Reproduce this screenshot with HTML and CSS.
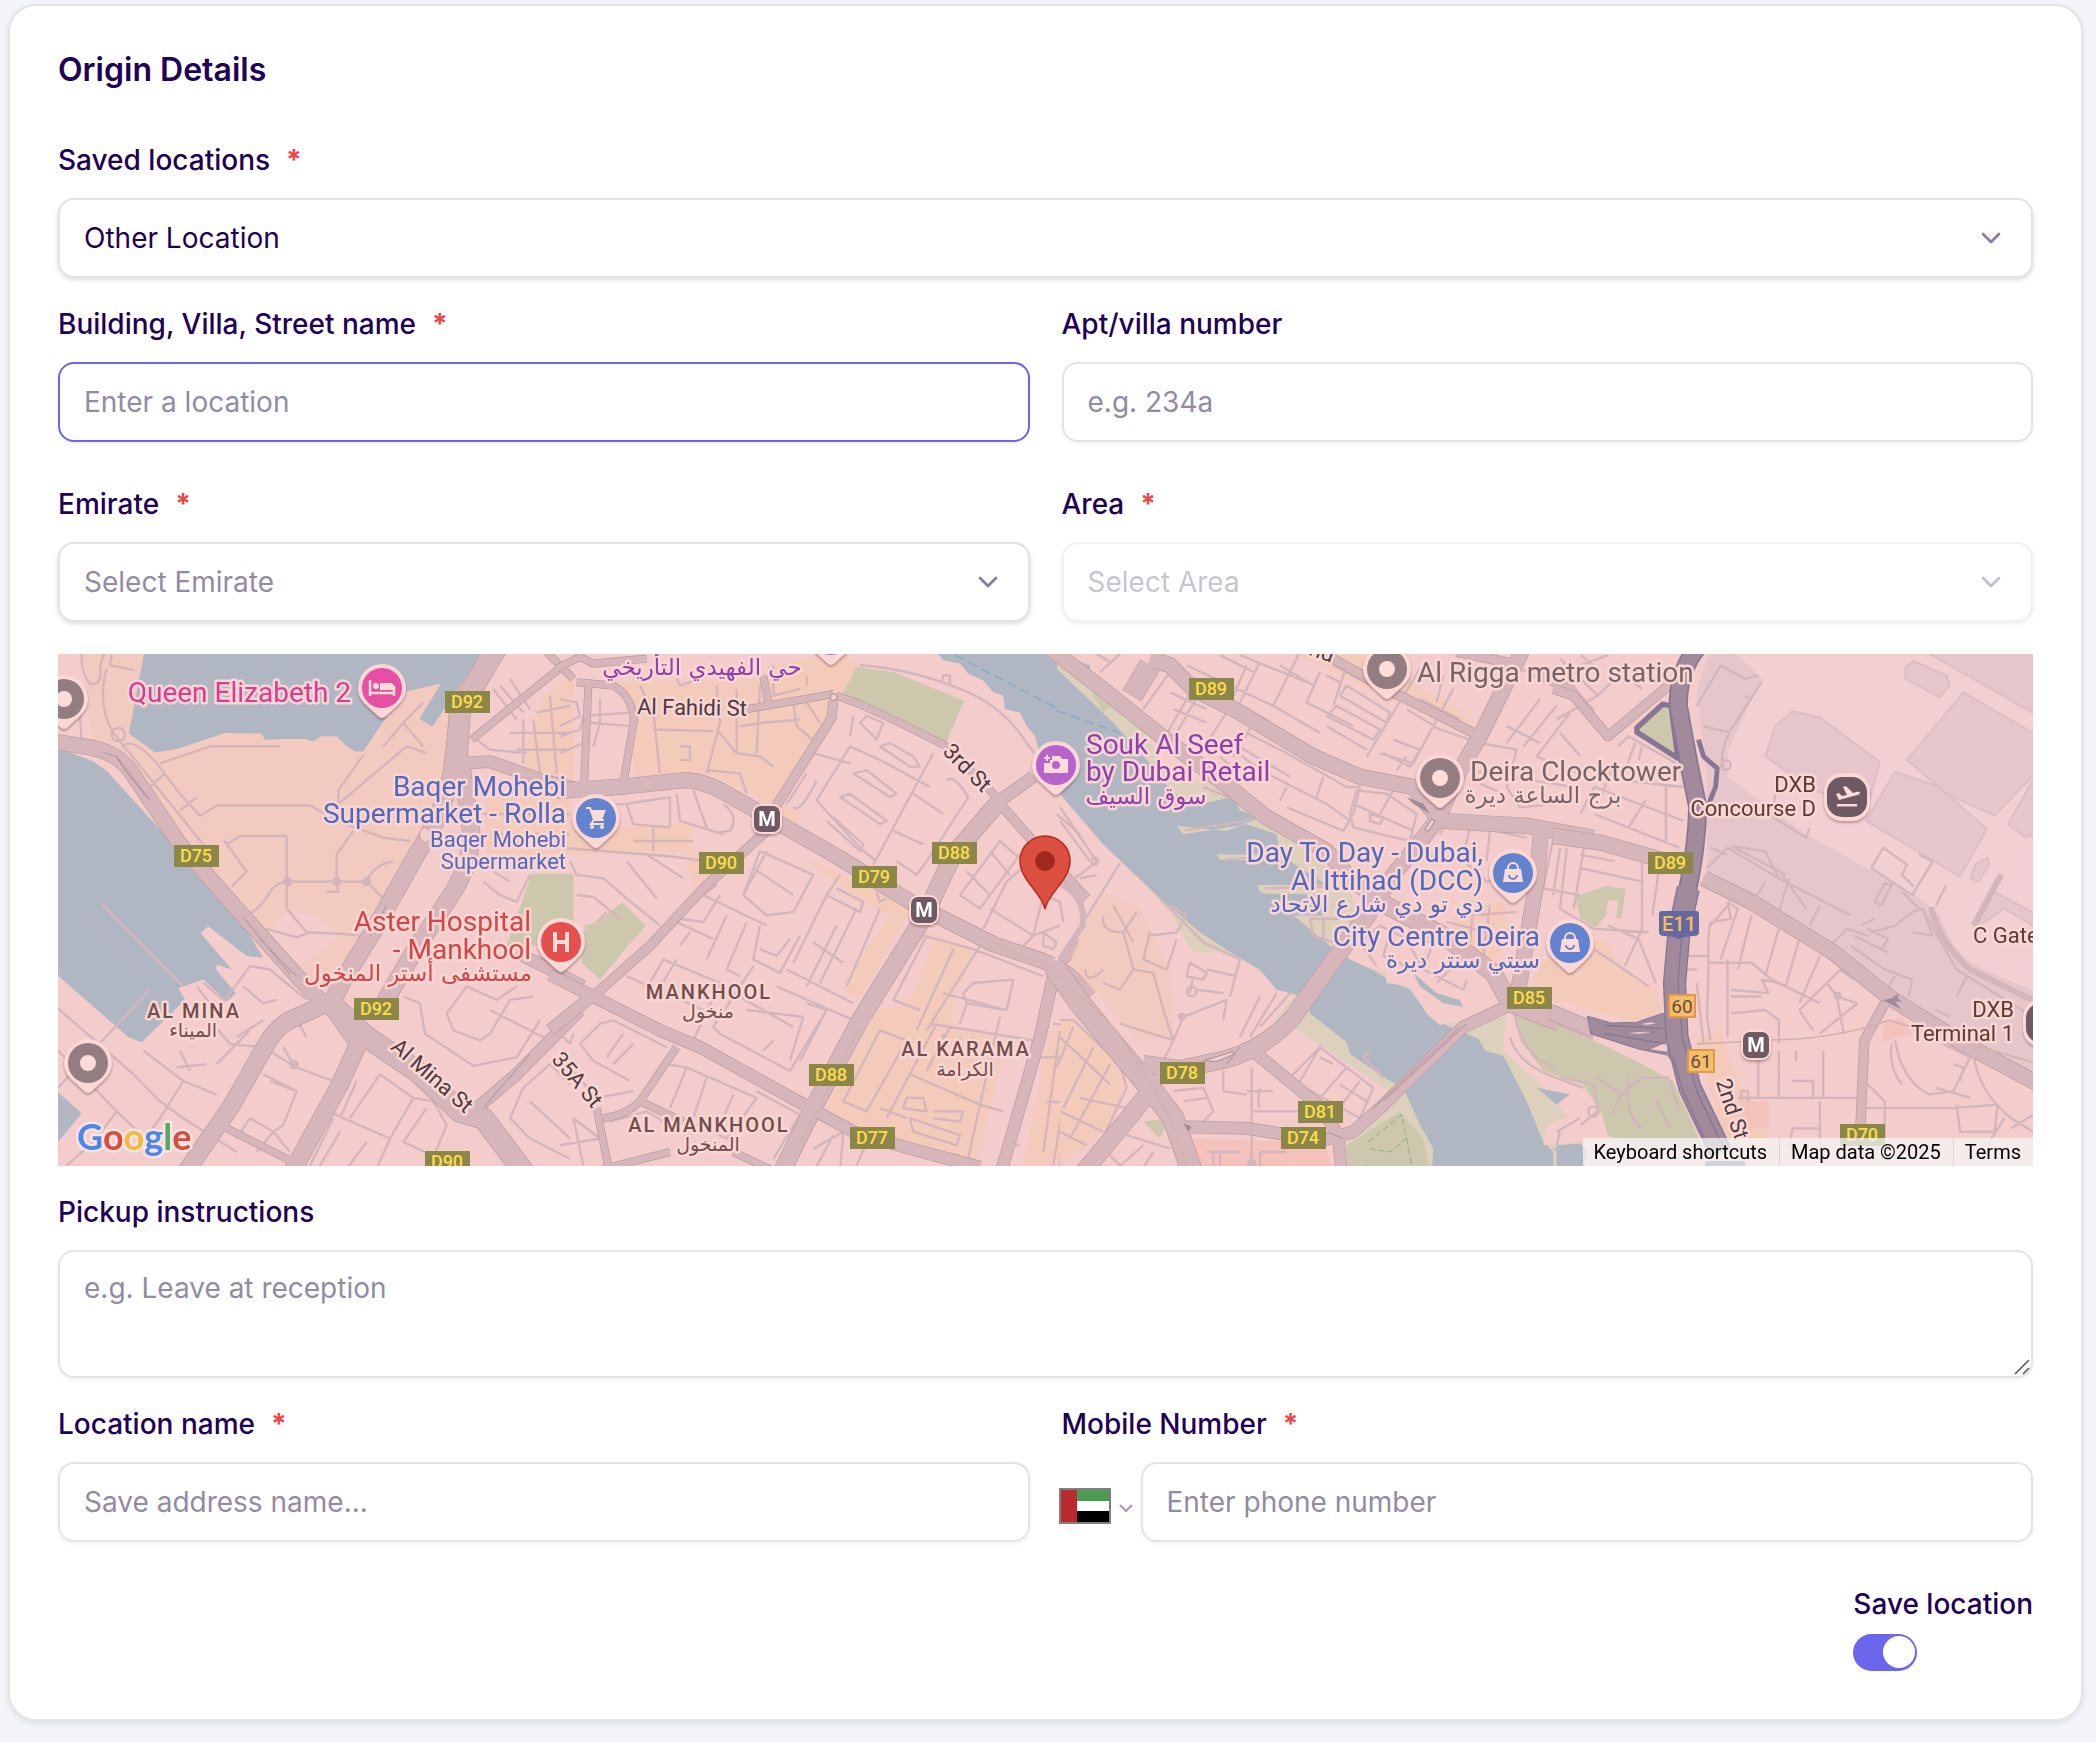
FILE: index.html
```html
<!DOCTYPE html>
<html lang="en">
<head>
<meta charset="utf-8">
<meta name="viewport" content="width=device-width, initial-scale=1">
<title>Origin Details</title>
<link rel="stylesheet" href="styles.css">
</head>
<body>
<svg class="sprite" aria-hidden="true">
  <symbol id="chevron" viewBox="0 0 24 24"><path d="m6 9 6 6 6-6" fill="none" stroke="currentColor" stroke-width="2" stroke-linecap="round" stroke-linejoin="round"/></symbol>
</svg>
<main class="card">
  <h1 class="card-title">Origin Details</h1>
  <form class="form">
    <div class="field">
      <label class="label" for="saved">Saved locations <span class="req">*</span></label>
      <div class="select raised">
        <select id="saved"><option>Other Location</option></select>
        <svg class="chev" aria-hidden="true"><use href="#chevron"/></svg>
      </div>
    </div>

    <div class="row">
      <div class="field">
        <label class="label" for="street">Building, Villa, Street name <span class="req">*</span></label>
        <input class="control active" id="street" type="text" placeholder="Enter a location">
      </div>
      <div class="field">
        <label class="label" for="apt">Apt/villa number</label>
        <input class="control" id="apt" type="text" placeholder="e.g. 234a">
      </div>
    </div>

    <div class="row spaced">
      <div class="field">
        <label class="label" for="emirate">Emirate <span class="req">*</span></label>
        <div class="select raised empty">
          <select id="emirate"><option>Select Emirate</option></select>
          <svg class="chev" aria-hidden="true"><use href="#chevron"/></svg>
        </div>
      </div>
      <div class="field">
        <label class="label" for="area">Area <span class="req">*</span></label>
        <div class="select raised empty disabled">
          <select id="area" disabled><option>Select Area</option></select>
          <svg class="chev" aria-hidden="true"><use href="#chevron"/></svg>
        </div>
      </div>
    </div>

    <section class="map" aria-label="Map">
      <svg class="map-canvas" viewBox="58 654 1975 512" preserveAspectRatio="xMidYMid slice">
        <defs>
          <path id="pin-shape" d="M-24 0a24 24 0 1 1 48 0c0 8-4 13-9 18L4 28q-4 4-8 0L-15 18c-5-5-9-10-9-18z"/>
          <g id="shop"><path d="M-8-4h16l2 13h-20z" fill="#fcdcd9"/><path d="M-5-3v-2a5 5 0 0 1 10 0v2" fill="none" stroke="#fcdcd9" stroke-width="2"/><path d="M-4 2a4 4 0 0 0 8 0" fill="none" stroke="#6483cf" stroke-width="2"/></g>
          <g id="metro"><rect x="-15" y="-15" width="30" height="30" rx="9" fill="#fbd8d5"/><rect x="-13" y="-13" width="26" height="26" rx="7" fill="#6f5962"/><text class="metro-m" y="7">M</text></g>
          <g id="plane"><rect x="-23" y="-24" width="46" height="48" rx="18" fill="#fbd8d5"/><rect x="-20" y="-20" width="40" height="40" rx="15" fill="#6f5962"/><path d="M-10 7H10v2.500H-10zM-11-3l3-1 3 3 5-1-4-8 3-1 7 7 5-1.500q2 0 2 1.500l-1 1.500L-8 3z" fill="#fcdcd9"/></g>

          <g id="roads-a">
            <path class="w44" d="M10 285L130 305Q200 320 240 370L390 590 560 780 760 1000 820 1060"/>
            <path class="w52" d="M830 1060L720 1110Q680 1130 650 1180L540 1370 400 1570M1360 -10L1230 180 1205 380Q1180 500 1100 620L980 830 880 990 840 1070M1230 330L1265 560Q1260 650 1210 730L1090 910 990 1080M840 1060L925 1180 870 1300 720 1570"/>
            <path class="w64" d="M830 1050L950 1160 1100 1260 1230 1380 1300 1400 1430 1570M1350 -10L1230 190 1215 400"/>
            <path class="w36" d="M1270 1380L1400 1270 1590 1080M1400 910L1600 1010M1230 350L1320 345 1480 400 1600 430"/>
            <path class="w22" d="M1265 280L1540 60M1490 20L1570 100M510 1420L730 1530"/>
          </g>
          <g id="roads-b">
            <path class="w44" d="M-10 432L200 418 370 400Q430 400 500 440L830 625 1060 765 1300 885 1450 935Q1530 965 1590 1040"/>
            <path class="w52" d="M1320 460L1180 620 1095 800 900 1110 760 1370 660 1570"/>
            <path class="w36" d="M-30 975L110 1045 300 1140 420 1190 760 1375 880 1440 1050 1490 1260 1545M1420 390L1320 460M1480 980L1440 1160 1370 1400 1320 1570M100 1035L-30 1140"/>
            <path class="w28" d="M820 165L815 215 640 490M620 550L430 720 270 890 110 1030M1320 470L1400 560 1580 750M1580 870L1490 950"/>
            <path class="w22" d="M560 190L820 145M830 150L900 175 1040 240 1160 300 1310 450M350 1190L240 1350Q200 1390 130 1400M110 1370L150 1570M240 1350L370 1410M130 1550L330 1500M520 1500L650 1560M-10 70L60 35 100 55 260 40M50 110L160 120Q215 150 222 220L190 410M85 120L72 415M610 90L625 170"/>
          </g>
          <g id="roads-c">
            <path class="w64" d="M-20 950L60 1060 160 1180 270 1310 340 1400 400 1570M270 60L215 150"/>
            <path class="w52" d="M930 790L830 920 700 1100Q620 1190 500 1225L360 1255 250 1240M270 1320L180 1430 70 1560M960 760L1150 860 1300 970 1350 1060 1480 1110 1600 1160"/>
            <path class="w44" d="M-30 10L140 140 330 290 480 400 620 510 800 610 880 700 1000 780M270 40L330 60 400 130 540 200 760 330 900 390 1060 420 1140 520 1400 535 1600 570M1390 10L1260 270 1200 370 1130 520 1000 680 910 820M1445 530L1430 700 1370 1050"/>
            <path class="w36" d="M360 1425L560 1430 790 1465 880 1440 960 1370 1210 1130 1340 1070M590 1210L780 1365 835 1450 845 1570M250 1310L320 1270"/>
            <path class="w28" d="M780 20L1000 140 1240 260M1440 90L1530 130 1590 200M1190 20L1380 60"/>
          </g>
          <g id="roads-d">
            <path class="w44" d="M420 690L560 760 800 910 960 1040 1180 1180 1420 1310M-20 565L120 585 260 625 380 660M-30 1085L100 1140"/>
            <path class="w28" d="M950 1060L890 1170 878 1440M-20 130L40 150 140 270 330 110"/>
          </g>
        </defs>

        <rect x="58" y="654" width="1975" height="512" fill="#f3cccb"/>

        <!-- west: port and Al Mina -->
        <g transform="translate(50 645) scale(.3333 .338)">
          <path fill="#f3cabf" d="M90 20H1300L1140 560 980 800 880 980 860 1055 1000 1060 950 1060 700 940 740 850 640 860 560 760 380 580 200 320 130 290z"/>
          <path fill="#f3cccb" d="M710 790L790 795 870 860 740 960 640 870z"/>
          <path fill="#f4cabb" d="M1430 290L1480 150 1570 90V450L1430 400zM1310 450H1560V620H1310z"/>
          <path class="water" d="M283 20H1300L1145 245 1108 218 1172 115 1060 140 940 315 915 315 885 295 860 270 815 270 790 285 765 278 700 278 645 280 635 262 525 260 380 308 315 318 237 262zM20 303L130 345 170 372 380 600 540 765 640 925 590 920 475 832 452 852 545 960 500 945 498 960 558 1030 530 1055 460 990 385 1015 405 1050 275 1175 235 1160 20 975zM20 1320L95 1385 20 1475z"/>
          <path fill="#f3cabf" d="M1172 115L1060 140 940 315 1000 400 1150 330 1160 250 1108 218z"/>
          <path class="green" d="M1445 677H1570V890H1370z"/>
          <path class="minor" d="M152 763L400 1010M95 20Q90 80 120 115 160 120 150 60L165 20M185 30L180 60 255 75M170 70Q140 180 190 260L460 590M90 200L95 290M215 300Q250 270 320 350L390 440 450 505 500 475H780L860 520 1000 570 1080 580M330 350L480 300H690M390 490L440 450M300 420L345 380M940 325L865 430V470L1070 300 1130 320M1000 300L1060 230 1120 170M1060 230L1120 300M520 575L590 670 545 715M530 590L570 565H710V780L770 850 880 855 930 860M710 700H860L950 700 1010 760M860 700V620L910 550M600 795Q640 770 660 730 680 700 720 700M650 840L740 865 780 850M950 700Q970 650 1030 640M860 700L865 730H830M300 80M1330 130L1400 220M1350 120L1420 200M1380 100L1440 190M1280 280L1320 310 1430 320M1420 220V350M1450 220L1470 380M1500 150L1520 380M1380 260H1560M1400 310H1560M1460 200L1560 180M1300 700L1350 740 1400 760 1440 680M1330 670L1380 700M1300 500H1560M1350 560H1560M1060 1040L1110 1060 1125 1150 1270 1245 1400 1220 1470 1110M1250 1010L1190 1090 1210 1140 1290 1170 1320 1150 1380 1050 1450 1040M1250 1010L1340 1050 1400 1010M1320 1080L1420 1130 1500 1170M1380 1400L1420 1310 1500 1240 1560 1300M1380 1400L1440 1460 1560 1520M1440 1350L1560 1460M24 1075L250 1270 330 1350 400 1400 560 1500M24 1200L200 1380 330 1500M24 1310L110 1220 300 1020M280 1200L400 1290 500 1330M200 1380L130 1470 50 1540M400 1290L330 1400 250 1500M480 1110L600 950 660 960 770 1050M560 1160L640 1110M480 1110L540 1180 630 1190M500 1240L600 1140M640 1190L740 1250 850 1290M730 1240L700 1190M640 1270L740 1320 700 1420 670 1440 600 1400M740 1320L660 1290M600 1400L560 1460M670 1440L720 1500M670 1440L620 1500M990 1270L1090 1340 1020 1460 880 1400 820 1370M990 1270L900 1400M920 1290L870 1400M1090 1340L1150 1350 1190 1420 1140 1540M1130 1370L1060 1470 1190 1530M850 1400L780 1540M870 1440L810 1540M950 1470L890 1550M1020 1460L980 1550M390 1200L420 1260M380 1250L470 1240M440 1010L480 1060M460 1000L520 1050M580 1010L640 1060 680 1050M740 1110L770 1160"/>
          <circle class="minor" cx="205" cy="265" r="20"/>
          <circle class="dot" cx="713" cy="700" r="14"/><circle class="dot" cx="860" cy="700" r="14"/><circle class="dot" cx="950" cy="700" r="14"/><circle class="dot" cx="733" cy="1242" r="14"/>
          <use href="#roads-a" class="casing"/><use href="#roads-a" class="surface"/>
          <path d="M160 318L200 330 300 460M200 330Q215 365 300 460M580 805L720 975M630 870L740 980M1010 770L960 860M1300 1370L1440 1210" class="hair"/>
          <ellipse cx="1125" cy="562" rx="16" ry="22" fill="#f3cccb" stroke="#c5a1a8" stroke-width="3"/>
        </g>

        <!-- Mankhool and Al Karama -->
        <g transform="translate(560 645) scale(.3333 .338)">
          <path fill="#f4cabb" d="M180 110L600 100 640 60 850 20 900 60 820 190 640 470 440 380 230 400 200 200zM660 470L730 500 690 540zM30 540L400 530 390 590 460 690 400 710 370 610 30 620zM720 620L850 680 1060 770 900 1045Q850 1040 850 1000L990 800 880 740zM1090 840L1240 900 1170 1110 1340 1170 1250 1540 870 1425 800 1370 950 1080 1020 1070zM1470 1150L1560 1110V1440L1480 1540 1390 1540z"/>
          <path fill="#f3cccb" d="M1060 880L1120 870 1060 1040 1010 1060zM1180 1040L1230 960 1440 980 1340 1170 1180 1120z"/>
          <path class="green" d="M847 145L890 65 1000 80 1213 165 1155 295 1040 235 880 165zM187 762L258 830 200 895 120 990 65 940 75 830 110 820zM-5 685H40L35 800-5 812z"/>
          <path class="water" d="M1130 20L1150 45 1200 55 1225 85 1270 105 1300 140 1330 150 1335 190 1380 200 1400 240 1425 270 1435 310 1500 390 1590 510V60L1450 20z"/>
          <path d="M1185 30L1560 222" class="ferry"/>
          <path class="minor" d="M900 60Q1050 70 1200 130 1330 180 1400 290L1590 530M1145 110L1150 90 1170 90V115M0 160L50 170 60 210 0 240M0 270L60 250 70 210 210 200M0 320L70 290M90 230L210 240M100 300L120 230V160M240 120L280 200 300 380M280 250L460 255M350 100L360 120 450 90M470 120L480 230 440 380M530 130V320L600 330 640 360M540 240L610 230 720 220M600 120L590 320M360 300L390 300V340H360M530 320L470 250M440 370L540 380 560 440M640 60V150L720 130M740 90V120M700 170L710 240 770 290M740 170L780 230M200 470L220 530 330 540M200 470L330 450V540M350 440L360 520 490 560M220 580H400M280 540V610M490 470Q540 510 510 550L470 555M400 430L440 540M60 480L200 470M0 600L330 625 440 640M30 640L50 680 130 690 200 750 300 830M200 640L290 750M260 620L370 690M50 740L100 745 180 810M110 820L140 790M700 480Q720 500 770 400M720 370L760 320 870 350M680 470L740 380M870 300L770 460 900 600 950 640M870 300L960 340 1110 420M900 230L950 280 970 230 920 210zM880 210L870 270M960 300L1050 360 1080 360 1060 330 990 290zM880 380L990 450 1010 440 920 370zM840 450L960 530 980 520 870 440zM800 520L900 610 910 590 820 510M1120 320L1000 540 940 650M1160 400Q1180 380 1225 450L1100 640 1070 680 1010 640M1060 440L1150 500M1000 550L1090 590M1200 740L1320 580 1390 640M1200 740L1260 780 1380 620M1220 670L1290 740M1290 610L1350 680M1270 840L1340 700 1410 640M1290 780L1420 860 1500 830M1420 860L1450 740 1500 760 1510 820M1450 850L1490 880 1480 900 1450 890zM1390 890L1420 860M600 610L760 680 700 790 620 800 550 740zM580 660L700 740M620 610L550 740M840 680L800 740 700 940M800 740L900 790 910 760 830 720M760 880L850 940M830 830L740 1010M890 780L780 1000M960 780L860 1010M470 710L430 740M480 740L430 820 360 810M430 740L620 830M500 800L440 930M560 820L500 960M350 820L460 870M390 850L360 890M600 830L580 930 660 970 720 860M600 900L650 920 690 870M200 980L270 1010M270 1000L310 930 480 1000 400 1170M350 930L290 1030M200 980L430 1080M500 960L540 980M580 950L460 1130 480 1150 690 1260 800 1080 740 1060M520 1030L700 1130M650 1010L880 1110M610 1200L640 1170M800 1080L720 1230M560 1080L730 1100 690 1230M680 960L880 1060M950 730L960 760 980 750M60 1180L120 1120 160 1110 320 1190M60 1180L100 1230 210 1290M140 1220L190 1150M160 1240L220 1180M30 1250L110 1340 220 1320M0 1150L30 1180 40 1150M270 1300L320 1240 380 1250 590 1340 500 1460 320 1380M380 1250L330 1370M440 1280L400 1400M520 1330L480 1420M150 1410L260 1380 380 1450M590 1320L720 1390 640 1520M40 1400L120 1460 0 1480M40 1400L70 1540M760 1490L850 1440 840 1560M820 1450L760 1560M940 1430L880 1560M1090 860L1240 900M1100 860L1000 1050 1080 1080M1180 900L1070 1140M1240 900L1450 980M1260 890L1100 1140M1210 1030L1240 1000 1360 990 1340 1080 1220 1060zM1150 1030L1340 1080M1220 1060L1200 1120M1110 1120L1420 1170M960 1140L850 1350 920 1380 1040 1170zM1130 1120L980 1400M1170 1130L1100 1260M1050 1270L1260 1360M1260 1360L1220 1540M1150 1150L1140 1200M1200 1160V1200M1240 1160L1220 1220M1040 1340L1090 1340 1100 1380 1030 1370zM1120 1380L1210 1380 1200 1410 1120 1400M1050 1400L1200 1450 1190 1480 1060 1440zM960 1370L1040 1400M980 1480L1200 1510M1320 1100L1260 1360 1330 1380M1440 1220H1580M1480 1120L1560 1130M1500 1140L1450 1500M1540 1170L1480 1540M1460 1350L1570 1360M1520 1250L1500 1540M1380 1480L1340 1470M1490 500L1560 560"/>
          <use href="#roads-b" class="casing"/><use href="#roads-b" class="surface"/>
          <circle cx="821" cy="154" r="10" fill="#f3cccb" stroke="#a98f96" stroke-width="3"/>
          <path fill="#f3cccb" d="M1482 930L1492 920 1498 935zM1510 955L1520 945 1522 960zM1488 1005L1502 1002 1492 1015z"/>
          <path d="M1250 860L1580 1000M720 1480L900 1130" class="rail"/>
        </g>

        <!-- the creek and Deira -->
        <g transform="translate(1060 645) scale(.3333 .338)">
          <path fill="#f4cabb" d="M690 20H880L1200 190 1240 250 1060 190zM1200 780L1330 760 1350 880 1280 950 1150 880zM1440 940L1560 860V1060L1400 1050zM0 1100L40 1110 200 1270 160 1420 0 1540z"/>
          <path fill="#f3cabf" d="M70 840L130 730 240 780 330 960 340 1160 230 1170 180 1110 30 940z"/>
          <path fill="#f5c1bb" d="M390 1460L700 1470 800 1490 820 1560H400z"/>
          <path class="shore" d="M-10 20L180 150 340 400 520 400 700 580 850 700 940 850 850 940 1060 980 1160 1120 1340 1100 1330 1200 1440 1300 1560 1440V1570H1120L860 1570 860 1470 1000 1330 700 1130 600 1170 700 1040 520 910 400 910 330 790 0 430z"/>
          <path class="water" d="M-10 70L160 230 260 340 340 440 420 470 520 450 540 490 600 510 650 560 660 600 840 735 700 800 810 890 870 930 945 965 985 990 1050 1020 1110 1100 1170 1130 1255 1165 1275 1200 1330 1215 1400 1350 1450 1470 1480 1500V1570H1115L1120 1490 1080 1420 1030 1310 990 1290 870 1210 860 1175 750 1090 750 1060 740 1040 710 1035 650 1020 600 960 520 915 420 850 300 750 130 590-10 430z"/>
          <path fill="#ddd0bd" d="M350 535L500 550 600 510 720 620 860 720 850 860 600 730 590 710 800 710 690 640 480 635 470 620 660 620 650 560 560 530 370 560z"/>
          <path fill="#b0b7c3" d="M600 560L645 570 650 612 560 610zM660 660L720 690 690 705 610 700zM600 735L770 738 790 800 700 800z"/>
          <path fill="#f3cccb" d="M870 900L1020 840 1160 870 1300 1000 1250 1080 1140 1125 1100 1090 1050 1010 980 1000 975 970 870 930zM610 1200L720 1165 990 1320 880 1415 700 1300zM1330 1150L1380 1130 1450 1270 1570 1310V1470L1450 1480 1460 1420 1560 1380 1440 1290 1330 1200z"/>
          <path class="water" d="M1060 970L1130 1030 1200 1050 1210 1070 1150 1060 1080 1010zM1430 1310L1530 1330 1490 1360z"/>
          <path class="green" d="M1360 1070L1570 1160V1300L1450 1260 1380 1170zM860 1480L1020 1380 1090 1460 1110 1560H860zM90 130L180 160 130 200zM250 1410L330 1400 300 1460z"/>
          <path d="M-10 195L180 260" class="ferry"/>
          <path d="M925 1470L1025 1390 1040 1460 990 1500 930 1490M920 1540L1000 1560M1040 1460L1060 1560" class="trail"/>
          <path class="minor" d="M375 548L560 520 600 490 680 560M495 635L560 630M615 720L800 715M600 490L430 420M30 60L180 200M100 20L150 50M180 27L120 80M330 80L250 190M410 110L310 280M520 170L400 350M430 120L350 260M440 230L340 190M330 140L440 190M580 230L520 330M500 290L560 340 620 380 700 420 800 470 870 520M480 330L560 400M520 290L690 390M560 260L680 320 860 420 900 420 880 500 850 550 680 480M620 370L590 410M680 420L660 460M790 390L770 450M720 20L640 180 780 260M380 60L640 180M600 50L540 170M560 60L520 150M480 30L580 80M540 30L740 110M660 60L760 120M780 80L740 170 880 240M800 90L840 110M820 60L1010 160M860 120L990 200 980 230 840 150zM830 180L960 250 940 280 800 210zM800 240L920 310M1080 70L920 330M1180 130L1060 350 960 320M1040 190L1140 250 1230 280M1080 160L1200 220M1000 280L1080 310 1050 360 970 320M1150 90L1130 170M860 60L820 180M1010 370L1040 330M1260 290L1370 310 1340 420 1380 480 1490 470M1230 370L1540 420M1260 410L1330 440M1440 160L1340 290M1530 200L1430 330 1560 380M1380 70L1560 150M1340 240L1440 290M1490 180L1390 300M890 430L980 440 1070 500 1050 580 880 540 870 500zM930 500L970 510 960 530 930 520zM880 470L1060 550M1000 430L960 500M1480 570L1450 720 1560 740M1500 600L1480 740M1520 590H1580M1140 560L1160 520 1400 570M1230 540L1210 620M1290 550L1280 640M1100 620L1240 640M1170 600L1280 700 1400 680M1220 800L1370 790M1240 770L1230 880M1290 770L1270 920M1160 820L1370 870M750 810L860 810 920 850M750 810L760 860 820 880M790 810V870M960 830L1040 870 1090 960 1210 1020M960 830L900 880 950 950M990 850L970 920 1040 950M1040 870L1120 880 1090 960M1180 950L1130 1000M1210 1020L1220 990M180 645L70 820M160 770L220 880M130 800Q120 850 190 850L230 790M190 850L220 960 180 1020 130 1000M75 960Q80 1010 130 960M300 750L430 880 540 930 510 1040M270 860L350 850 380 800 330 770M270 850L250 930 320 960 350 870M220 960L280 970 310 1080 340 1170 310 1230M390 940L440 970 430 990 380 980zM400 980L390 1030M440 960L530 980M410 1020L490 1030M370 1100L500 1050 490 1110M370 1100L340 1170M340 1170L180 1120M600 1040L540 1160M650 1030L570 1160M690 1030L600 1130M0 1110L40 1110 180 1240 200 1310 80 1560M0 1160L150 1300M40 1130L-10 1250M100 1190L10 1370M150 1240L30 1460M0 1380L130 1440M0 1440L80 1480M60 1340L200 1370M200 1450L330 1490M150 1510L200 1560M250 1480L160 1560M280 1500L240 1560M340 1320L430 1310 460 1380 430 1410M370 1350L440 1340M490 1260V1320L560 1330M575 1250V1560M560 1320H640M640 1380H720M580 1380H700M600 1310Q590 1350 600 1370M690 1280L780 1190 940 1310 900 1400 700 1290M780 1190L720 1290M860 1250L780 1340M900 1290L830 1380M780 1220L820 1240M840 1300L920 1350M460 1500V1560M480 1500V1560M440 1500H540M600 1500H680M600 1550V1500M1360 1080Q1380 1180 1440 1230L1580 1290M1350 1160Q1370 1230 1460 1270L1570 1310M910 1220L970 1280M910 1220L930 1200M1480 1490L1560 1510M1500 1440L1490 1480M1490 1440L1560 1400M0 480L110 640 60 680 20 700M0 520L90 640M60 690L110 680"/>
          <circle class="minor" cx="395" cy="1025" r="14"/><circle class="dot" cx="366" cy="1100" r="12"/><circle class="minor" cx="597" cy="497" r="10"/><circle class="minor" cx="105" cy="640" r="10"/><circle class="dot" cx="575" cy="1535" r="14"/>
          <use href="#roads-c" class="casing"/><use href="#roads-c" class="surface"/>
          <path class="minor" stroke-width="22" d="M-10 700Q80 740 68 830L0 930"/>
          <path d="M940 1370L1200 1130M970 1350L1220 1120M800 1440L850 1460M540 1190L500 1240" class="hair"/>
          <path fill="#f3cccb" stroke="#a98f96" stroke-width="3" d="M1095 545L1115 515 1125 520 1105 552zM430 1230L520 1203 520 1212 470 1232z"/>
          <path fill="#a08a95" d="M1040 450L1090 470 1110 500 1060 470zM370 1415L395 1425 385 1440z"/>
          <path d="M-10 970L160 1130 250 1260 340 1420 390 1570" class="rail"/>
        </g>

        <!-- airport -->
        <g transform="translate(1560 645) scale(.3419 .338)">
          <path fill="#e7c6cb" d="M440 20H1400V1290L1180 1160 960 1030 700 840 430 690 430 400 400 130z"/>
          <path fill="#f2cfd3" d="M510 20H1070L1400 215V1030L1240 960Q1150 920 1110 800L1085 775 1040 740 905 665 720 560 490 390V270L595 105z"/>
          <path fill="#e7c6cb" stroke="#dfbdc5" stroke-width="6" stroke-linejoin="round" d="M680 195L760 215 935 345 900 480 740 430 600 330 630 240zM980 375L1110 420 1248 545 1170 685 895 520zM1180 140L1400 270V370L1270 505 1130 440 1015 340zM1035 48L1130 90 1140 120 1110 155 1010 100 1010 65zM1070 20L1400 210V20zM1400 370V560L1360 568 1310 530zM1200 690L1215 650 1250 628 1255 650 1225 700zM1270 730L1400 800V840L1300 780 1210 840 1290 680z"/>
          <path fill="#e7c6cb" d="M480 60L520 40 590 100 510 270 480 330 430 240 400 160z"/>
          <path fill="#f4cabb" d="M0 900L130 865 170 950 280 1020 300 1090 200 1115 0 1050zM400 1160L470 1140 520 1290 600 1400 610 1470 480 1470z"/>
          <path fill="#f5c1bb" d="M950 1120L1000 1100 1030 1150 940 1175zM530 1350H610V1430H540z"/>
          <path class="green" d="M45 745L135 712 192 722 180 810 165 808 170 755 140 755 135 800 105 835 60 810zM-10 1128L100 1170 240 1240 330 1290 420 1490H230L140 1450 120 1380 60 1290-10 1260z"/>
          <path class="water" d="M-10 1480L60 1475 80 1500 70 1550H-10z"/>
          <path class="minor" d="M-10 220L110 150M0 40L110 150 200 60M60 30L110 70M30 100L60 60 140 30M100 200L30 110M0 260L60 330M200 100L240 130M170 300L200 270 340 350M220 290L180 400 360 420M150 370L120 450M240 300L230 340M60 500L100 420 360 520M310 410V580M200 540L250 460M100 500L200 540 350 600M20 600L0 780 100 840 260 850M70 600L40 780M60 660L240 700M60 620L160 640M240 640V840L190 950M290 660L270 800M140 830L230 870 280 1000M100 900L260 1010M440 820Q430 870 435 940L430 1100 440 1170M440 820L500 810 490 760M500 760L440 830M490 760L520 780 470 930M560 800L520 960M640 840L600 980M700 870L660 1010M760 920L700 1060M440 940H560L620 990 700 1030 760 1060M490 930V1160M500 1020L610 1030 590 990 640 1000M500 1090L600 1080 640 1110V1180M700 1080L820 960 860 990M700 1080L740 1140M810 1040L830 1150M780 1000L810 1040 870 1060 760 1150M640 1200V1340M580 1200V1340M690 1200V1230M770 1200V1340M520 1340H870M680 1290H740V1340M530 1350V1320H550V1350M680 1430H760V1350M670 1490L680 1430M760 1360V1480M400 1200L390 1250M370 920H430M370 960H400M400 1000L420 1180M900 1300L950 1350V1460M890 1370H1150L1280 1360 1270 1450M1160 1360L1170 1440H1270M970 1180Q960 1250 1000 1300M980 1170Q1000 1290 1080 1330L1150 1320 1200 1220 1120 1180M1150 1240L1180 1250 1170 1290M1100 1310L1200 1340M1210 1220Q1230 1330 1320 1400L1384 1440M1300 1400L1250 1480M1320 1430L1384 1390M900 1450H940M430 660L490 600 640 690 850 800M500 595L600 610 640 690M440 600L490 620M510 600L660 680M560 770L600 700M650 680L720 780M640 790L670 690M730 830L760 770M790 890L840 840 900 860M860 860L960 910M850 890L950 960 1030 990 1020 1040M910 850L980 830 1030 790 1060 780 1090 860 1030 850M940 900L960 870 900 840M880 830L920 810M980 980L950 1030M910 660L945 600 1015 650 1000 680 1035 715M1050 620L1090 640 1030 740 910 660M1000 730L1050 780M1100 770L1130 710M1060 780L1160 960 1384 1100M920 760L940 770 970 710 950 705zM400 180L470 60M470 60L540 100 580 90M540 150L560 160M420 240L500 260M480 370Q460 330 500 250L590 110M730 540L720 570 560 470M630 440L620 500M1190 980L1160 1040M1100 1080L1140 1100M0 1280L100 1300 110 1380 60 1420M110 1280L180 1330 150 1390M180 1330L240 1280 320 1280M200 1280Q190 1400 240 1430M280 1340L320 1430M320 1290L350 1380M500 1040H590"/>
          <path class="minor" stroke-width="14" d="M1085 775Q1110 880 1200 960L1400 1060M1290 680L1210 830"/>
          <circle class="minor" cx="98" cy="1380" r="15"/><circle class="dot" cx="812" cy="1038" r="12"/><circle class="minor" cx="485" cy="355" r="14"/>
          <use href="#roads-d" class="casing"/><use href="#roads-d" class="surface"/>
          <path d="M400 1180L700 1165Q860 1150 960 1110L1400 1240" class="rail"/>
          <path fill="#a08a9c" d="M945 1050L970 1045 990 1030 988 1045 1000 1055 980 1055 998 1078 965 1062z"/>
          <path fill="#cdc7ae" stroke="#877693" stroke-width="16" stroke-linejoin="round" d="M300 175L325 180 345 335 225 258V245z"/>
          <path fill="none" stroke="#877693" stroke-width="14" stroke-linejoin="round" d="M405 280L420 330 460 365 455 420 435 470"/>
          <path fill="#a08a9c" stroke="#877693" stroke-width="3" stroke-linejoin="round" d="M80 1098L150 1118 225 1116 300 1090 340 1110 350 1260 315 1213 230 1195 90 1150z"/>
          <path fill="#f3cccb" stroke="#877693" stroke-width="2" d="M232 1123Q260 1110 284 1119 265 1128 232 1123zM188 1148Q230 1140 274 1146 240 1156 188 1148zM260 1197L316 1172 315 1205z"/>
          <g fill="none" stroke="#877693">
            <path stroke-width="56" d="M400 10Q345 80 346 180L375 340 403 480Q400 600 372 730L345 850"/>
            <path stroke-width="68" d="M375 720L348 850 335 1000 342 1160 380 1310 470 1500"/>
          </g>
          <g fill="none" stroke="#a08a9c">
            <path stroke-width="46" d="M400 10Q345 80 346 180L375 340 403 480Q400 600 372 730L345 850"/>
            <path stroke-width="60" d="M375 720L348 850 335 1000 342 1160 380 1310 470 1500"/>
          </g>
          <path fill="none" stroke="#877693" stroke-width="4" d="M355 870L345 1000 358 1160 400 1320 480 1490M330 1220L360 1320 440 1500M130 1150L310 1180M130 1125L300 1135"/>
        </g>

        <!-- route shields -->
        <g class="shield">
          <g transform="translate(467 702)"><rect x="-22" y="-11" width="45" height="22"/><text y="6">D92</text></g>
          <g transform="translate(196 856)"><rect x="-22" y="-11" width="45" height="22"/><text y="6">D75</text></g>
          <g transform="translate(376 1009)"><rect x="-22" y="-11" width="45" height="22"/><text y="6">D92</text></g>
          <g transform="translate(447 1162)"><rect x="-22" y="-11" width="45" height="22"/><text y="6">D90</text></g>
          <g transform="translate(721 863)"><rect x="-22" y="-11" width="45" height="22"/><text y="6">D90</text></g>
          <g transform="translate(874 877)"><rect x="-22" y="-11" width="45" height="22"/><text y="6">D79</text></g>
          <g transform="translate(954 853)"><rect x="-22" y="-11" width="45" height="22"/><text y="6">D88</text></g>
          <g transform="translate(831 1075)"><rect x="-22" y="-11" width="45" height="22"/><text y="6">D88</text></g>
          <g transform="translate(872 1138)"><rect x="-22" y="-11" width="45" height="22"/><text y="6">D77</text></g>
          <g transform="translate(1211 689)"><rect x="-22" y="-11" width="45" height="22"/><text y="6">D89</text></g>
          <g transform="translate(1182 1073)"><rect x="-22" y="-11" width="45" height="22"/><text y="6">D78</text></g>
          <g transform="translate(1320 1112)"><rect x="-22" y="-11" width="45" height="22"/><text y="6">D81</text></g>
          <g transform="translate(1303 1138)"><rect x="-22" y="-11" width="45" height="22"/><text y="6">D74</text></g>
          <g transform="translate(1529 998)"><rect x="-22" y="-11" width="45" height="22"/><text y="6">D85</text></g>
          <g transform="translate(1670 863)"><rect x="-22" y="-11" width="45" height="22"/><text y="6">D89</text></g>
          <g transform="translate(1862 1135)"><rect x="-22" y="-11" width="45" height="22"/><text y="6">D70</text></g>
        </g>
        <g class="shield blue">
          <g transform="translate(1679 924)"><path d="M-20-10q0-3 3-3h34q3 0 3 3v18q0 4-5 4-9 0-15 3-6-3-15-3-5 0-5-4z"/><text y="7">E11</text></g>
          <g transform="translate(1725 1174)"><path d="M-20-10q0-3 3-3h34q3 0 3 3v18q0 4-5 4-9 0-15 3-6-3-15-3-5 0-5-4z"/><text y="7">E11</text></g>
        </g>
        <g class="exit">
          <g transform="translate(1682 1006)"><rect x="-13" y="-11" width="26" height="22"/><text y="7">60</text></g>
          <g transform="translate(1701 1061)"><rect x="-13" y="-11" width="26" height="22"/><text y="7">61</text></g>
        </g>

        <!-- streets and districts -->
        <g class="street">
          <text transform="translate(692 708) rotate(1)" y="7">Al Fahidi St</text>
          <text transform="translate(967 768) rotate(45)" y="7">3rd St</text>
          <text transform="translate(432 1076) rotate(41)" y="7">Al Mina St</text>
          <text transform="translate(577 1080) rotate(50)" y="7">35A St</text>
          <text transform="translate(1732 1109) rotate(72)" y="7">2nd St</text>
          <text transform="translate(1322 652) rotate(20)" y="7">nd</text>
        </g>
        <g class="district">
          <text x="194" y="1018">AL MINA</text><text class="ar" x="193" y="1037">الميناء</text>
          <text x="709" y="999">MANKHOOL</text><text class="ar" x="708" y="1018">منخول</text>
          <text x="966" y="1056">AL KARAMA</text><text class="ar" x="965" y="1076">الكرامة</text>
          <text x="709" y="1132">AL MANKHOOL</text><text class="ar" x="708" y="1151">المنخول</text>
        </g>

        <!-- pins -->
        <g class="pins">
          <g transform="translate(382 688)" color="#e64fa3"><use href="#pin-shape"/><circle r="20"/><path d="M-12-8v16M-12 5h24M12 8v-10" stroke="#fcdcd9" stroke-width="2.500"/><path d="M-2-5h10q4 0 4 4v3H-2z" fill="#fcdcd9"/><circle cx="-6" cy="-2" r="3" class="light"/></g>
          <g transform="translate(64 699)" color="#937d81"><use href="#pin-shape"/><circle r="20"/><circle r="8" class="light"/></g>
          <g transform="translate(88 1063)" color="#937d81"><use href="#pin-shape"/><circle r="20"/><circle r="8" class="light"/></g>
          <g transform="translate(1387 669)" color="#937d81"><use href="#pin-shape"/><circle r="20"/><circle r="8" class="light"/></g>
          <g transform="translate(1440 778)" color="#937d81"><use href="#pin-shape"/><circle r="20"/><circle r="8" class="light"/></g>
          <g transform="translate(831 635)" color="#b862cc"><use href="#pin-shape"/><circle r="20"/></g>
          <g transform="translate(561 942)" color="#e5504f"><use href="#pin-shape"/><circle r="20"/><path d="M-6-10v20M6-10v20M-6 0H6" stroke="#fcdcd9" stroke-width="4"/></g>
          <g transform="translate(596 818)" color="#6483cf"><use href="#pin-shape"/><circle r="20"/><path d="M-10-10h4l5 12h9" fill="none" stroke="#fcdcd9" stroke-width="2"/><path d="M-6-8H10L6 2H-3z" fill="#fcdcd9"/><path d="M-2 2l-3 4H8" fill="none" stroke="#fcdcd9" stroke-width="2"/><circle cx="-4" cy="9" r="2" class="light"/><circle cx="6" cy="9" r="2" class="light"/></g>
          <g transform="translate(1056 765)" color="#b862cc"><use href="#pin-shape"/><circle r="20"/><path d="M-12-2h6v-3h2v-4H4l2 3h6V8h-24zM-12-8h2v-2h2v2h2v2h-2v2h-2v-2h-2z" fill="#fcdcd9"/><circle r="4"/></g>
          <g transform="translate(1513 873)" color="#6483cf"><use href="#pin-shape"/><circle r="20"/><use href="#shop"/></g>
          <g transform="translate(1570 943)" color="#6483cf"><use href="#pin-shape"/><circle r="20"/><use href="#shop"/></g>
        </g>
        <g class="stations">
          <use href="#metro" x="767" y="819"/><use href="#metro" x="924" y="910"/><use href="#metro" x="1756" y="1045"/>
          <use href="#plane" x="1847" y="797"/><use href="#plane" x="2046" y="1023"/>
        </g>

        <!-- places -->
        <g class="place pink end"><text x="351" y="702">Queen Elizabeth 2</text></g>
        <g class="place indigo end">
          <text x="566" y="796">Baqer Mohebi</text><text x="566" y="823">Supermarket - Rolla</text>
          <text class="small" x="566" y="847">Baqer Mohebi</text><text class="small" x="566" y="869">Supermarket</text>
          <text x="1483" y="862">Day To Day - Dubai,</text><text x="1483" y="890">Al Ittihad (DCC)</text>
          <text class="ar" x="1377" y="912">دي تو دي شارع الاتحاد</text>
          <text x="1540" y="946">City Centre Deira</text><text class="ar" x="1463" y="968">سيتي سنتر ديرة</text>
        </g>
        <g class="place red end">
          <text x="531" y="931">Aster Hospital</text><text x="531" y="959">- Mankhool</text>
          <text class="ar" x="418" y="981">مستشفى أستر المنخول</text>
        </g>
        <g class="place violet">
          <text x="1086" y="754">Souk Al Seef</text><text x="1086" y="781">by Dubai Retail</text>
          <text class="ar" x="1146" y="804">سوق السيف</text>
          <text class="ar" x="702" y="675">حي الفهيدي التأريخي</text>
        </g>
        <g class="place gray">
          <text x="1417" y="682">Al Rigga metro station</text>
          <text x="1470" y="781">Deira Clocktower</text><text class="ar" x="1543" y="803">برج الساعة ديرة</text>
        </g>
        <g class="place brown end">
          <text class="small" x="1816" y="792">DXB</text><text class="small" x="1816" y="816">Concourse D</text>
          <text class="small" x="2014" y="1017">DXB</text><text class="small" x="2014" y="1041">Terminal 1</text>
          <text class="small start" x="1973" y="943">C Gates</text>
        </g>

        <path d="M1045 909c-3-16-25-29-25-48a25 25 0 0 1 50 0c0 19-22 32-25 48z" fill="#da4f40" stroke="#b3291e" stroke-width="1.500"/>
        <circle cx="1045" cy="861" r="10" fill="#a3281c"/>

        <text class="logo" x="77" y="1150"><tspan fill="#4f86ec">G</tspan><tspan fill="#dd4b3e">o</tspan><tspan fill="#f3bb3c">o</tspan><tspan fill="#4f86ec">g</tspan><tspan fill="#56a860">l</tspan><tspan fill="#dd4b3e">e</tspan></text>
      </svg>
      <div class="attribution">
        <button type="button">Keyboard shortcuts</button><span>Map data ©2025</span><a href="#terms">Terms</a>
      </div>
    </section>

    <div class="field">
      <label class="label" for="notes">Pickup instructions</label>
      <div class="notes">
        <textarea class="control" id="notes" placeholder="e.g. Leave at reception"></textarea>
        <svg class="grip" viewBox="0 0 16 16" aria-hidden="true"><path d="M1 15 15 1M9 15l6-6" fill="none" stroke="currentColor" stroke-width="1.500"/></svg>
      </div>
    </div>

    <div class="row">
      <div class="field">
        <label class="label" for="name">Location name <span class="req">*</span></label>
        <input class="control" id="name" type="text" placeholder="Save address name...">
      </div>
      <div class="field">
        <label class="label" for="phone">Mobile Number <span class="req">*</span></label>
        <div class="phone">
          <button class="country" type="button" aria-label="Country: United Arab Emirates">
            <svg class="flag" viewBox="0 0 48 32" aria-hidden="true"><path fill="#fff" d="M0 0h48v32H0z"/><path fill="#4a9c55" d="M16 0h32v11H16z"/><path d="M16 21h32v11H16z"/><path fill="#bb2a30" d="M0 0h16v32H0z"/></svg>
            <svg class="tick" viewBox="0 0 14 9" aria-hidden="true"><path d="m1 1 6 6 6-6" fill="none" stroke="currentColor" stroke-width="2"/></svg>
          </button>
          <input class="control" id="phone" type="tel" placeholder="Enter phone number">
        </div>
      </div>
    </div>

    <div class="save">
      <label class="label" for="save">Save location</label>
      <input class="switch" id="save" type="checkbox" role="switch" checked>
    </div>
  </form>
</main>
</body>
</html>
```
FILE: styles.css
```css
:root {
  --ink: #210057;
  --muted: #938ba3;
  --line: #e4e4e4;
  --accent: #6c66ef;
  --danger: #ef4444;
}

* { box-sizing: border-box; }

body {
  margin: 0;
  padding: 4px 13px 20px 8px;
  background: #f4f5fb;
  color: var(--ink);
  font-family: Inter, "Liberation Sans", sans-serif;
  font-size: 28px;
}

input, select, textarea, button { font: inherit; color: inherit; }

.sprite { position: absolute; width: 0; height: 0; }

.card {
  padding: 48px;
  background: #fff;
  border: 2px solid var(--line);
  border-radius: 28px;
  box-shadow: 0 2px 6px rgba(0, 0, 0, .1);
}

.card-title {
  margin: 0 0 52px;
  font-size: 32px;
  font-weight: 600;
  line-height: 32px;
}

.form { display: flex; flex-direction: column; gap: 24px; }
.row { display: grid; grid-template-columns: 1fr 1fr; gap: 32px; }
.row.spaced { margin-top: 16px; }
.field { display: flex; flex-direction: column; gap: 16px; min-width: 0; }

.label {
  display: flex;
  gap: 16px;
  font-weight: 500;
  line-height: 44px;
}
.req { color: var(--danger); font-weight: 700; }

.control, .select select {
  width: 100%;
  height: 80px;
  padding: 0 24px;
  background: #fff;
  border: 2px solid var(--line);
  border-radius: 16px;
  outline: none;
  box-shadow: 0 2px 4px rgba(0, 0, 0, .05);
}
.control::placeholder { color: var(--muted); opacity: 1; }
.control.active { border-color: var(--accent); }

.notes { position: relative; }
.notes .control {
  display: block;
  height: 128px;
  padding: 16px 24px;
  line-height: 40px;
  resize: vertical;
}
.notes .control::-webkit-resizer { display: none; }
.grip {
  position: absolute;
  right: 3px;
  bottom: 3px;
  width: 16px;
  height: 16px;
  color: #555;
  pointer-events: none;
}

.select { display: grid; align-items: center; }
.select select, .chev { grid-area: 1 / 1; }
.select select { appearance: none; opacity: 1; }
.select.raised select { box-shadow: 0 2px 5px rgba(0, 0, 0, .14); }
.select.empty select { color: var(--muted); }
.select.disabled { opacity: .5; }
.chev {
  width: 32px;
  height: 32px;
  margin-right: 26px;
  justify-self: end;
  color: #8b7baa;
  pointer-events: none;
}

.phone { display: flex; align-items: center; }
.country {
  display: flex;
  align-items: center;
  gap: 8px;
  flex: none;
  margin: 8px 8px 0 -3px;
  padding: 0;
  border: 0;
  background: none;
}
.flag { width: 52px; height: 36px; border: 2px solid #808080; }
.tick { width: 14px; height: 9px; margin-top: 4px; color: #a594c4; }

.save {
  display: flex;
  flex-direction: column;
  gap: 8px;
  align-self: flex-end;
  margin-top: 16px;
}
.switch {
  appearance: none;
  display: flex;
  justify-content: flex-end;
  width: 64px;
  height: 37px;
  margin: 0;
  padding: 2px;
  border-radius: 20px;
  background: var(--accent);
}
.switch::before {
  content: "";
  width: 32px;
  height: 32px;
  border-radius: 50%;
  background: #fff;
}

/* map */
.map { position: relative; height: 512px; margin-top: 8px; overflow: hidden; }
.map-canvas { display: block; width: 100%; height: 100%; font-family: Roboto, "DejaVu Sans", sans-serif; }

.water { fill: #b0b7c3; }
.green { fill: #cdc7ae; }
.shore { fill: #ddd0bd; }
.minor { fill: none; stroke: #d5b5bc; stroke-width: 7px; stroke-linejoin: round; }
.minor[stroke-width] { stroke-width: 18px; }
.dot { fill: #d5b5bc; }
.hair { fill: none; stroke: #b5979e; stroke-width: 3px; }
.rail { fill: none; stroke: #d3b2ad; stroke-width: 5px; }
.trail { fill: none; stroke: #9bab90; stroke-width: 3px; stroke-dasharray: 20 8; }
.ferry { fill: none; stroke: #86a9c0; stroke-width: 4px; stroke-dasharray: 30 14; }

.casing { --edge: 4px; stroke: #b89aa0; }
.surface { --edge: 0px; stroke: #d6b6bb; }
.casing, .surface { fill: none; stroke-linejoin: round; }
.w22 { stroke-width: calc(20px + var(--edge)); }
.w28 { stroke-width: calc(26px + var(--edge)); }
.w36 { stroke-width: calc(34px + var(--edge)); }
.w44 { stroke-width: calc(44px + var(--edge)); }
.w52 { stroke-width: calc(50px + var(--edge)); }
.w64 { stroke-width: calc(62px + var(--edge)); }

.shield { fill: #8c8748; font-size: 18px; font-weight: 500; text-anchor: middle; }
.shield text { fill: #fcdc4e; }
.shield.blue { fill: #66689f; }
.shield.blue text { fill: #f5bd5c; font-size: 20px; }
.exit { fill: #f6be69; stroke: #dd9c4d; stroke-width: 2px; font-size: 19px; text-anchor: middle; }
.exit text { fill: #6b4a44; stroke: none; }

.street, .district, .place, .logo {
  paint-order: stroke;
  stroke: #f8d6d3;
  stroke-width: 5px;
  stroke-linejoin: round;
}
.street { fill: #503842; font-size: 22px; text-anchor: middle; }
.district { fill: #744c4c; font-size: 20px; font-weight: 500; text-anchor: middle; letter-spacing: 2px; }
.ar { font-family: "DejaVu Sans", sans-serif; font-size: 23px; font-weight: 400; letter-spacing: 0; text-anchor: middle; }
.district .ar { font-size: 19px; }
.place { font-size: 28px; }
.place .small { font-size: 22px; }
.end { text-anchor: end; }
.start { text-anchor: start; }
.pink { fill: #d93c94; }
.indigo { fill: #5467bd; }
.red { fill: #d44545; }
.violet { fill: #9040ac; }
.gray { fill: #7a6368; }
.brown { fill: #5f3a35; }

.pins > g { fill: currentColor; }
.pins use[href="#pin-shape"] { fill: #fbd8d5; filter: drop-shadow(0 2px 1px rgba(90, 50, 60, .4)); }
.light { fill: #fcdcd9; }
.stations { filter: drop-shadow(0 2px 1px rgba(90, 50, 60, .35)); }
.metro-m { fill: #fff; font-size: 20px; font-weight: 700; text-anchor: middle; }
.logo { font-family: Lato, sans-serif; font-size: 36px; font-weight: 700; stroke: #f7e4e4; }

.attribution {
  position: absolute;
  right: 0;
  bottom: 0;
  display: flex;
  gap: 1px;
  color: #000;
  font-family: Roboto, sans-serif;
  font-size: 20px;
  line-height: 28px;
}
.attribution > * {
  padding: 1px 12px 0 11px;
  border: 0;
  background: rgba(245, 245, 245, .75);
  color: inherit;
  line-height: 27px;
  text-decoration: none;
}
```
